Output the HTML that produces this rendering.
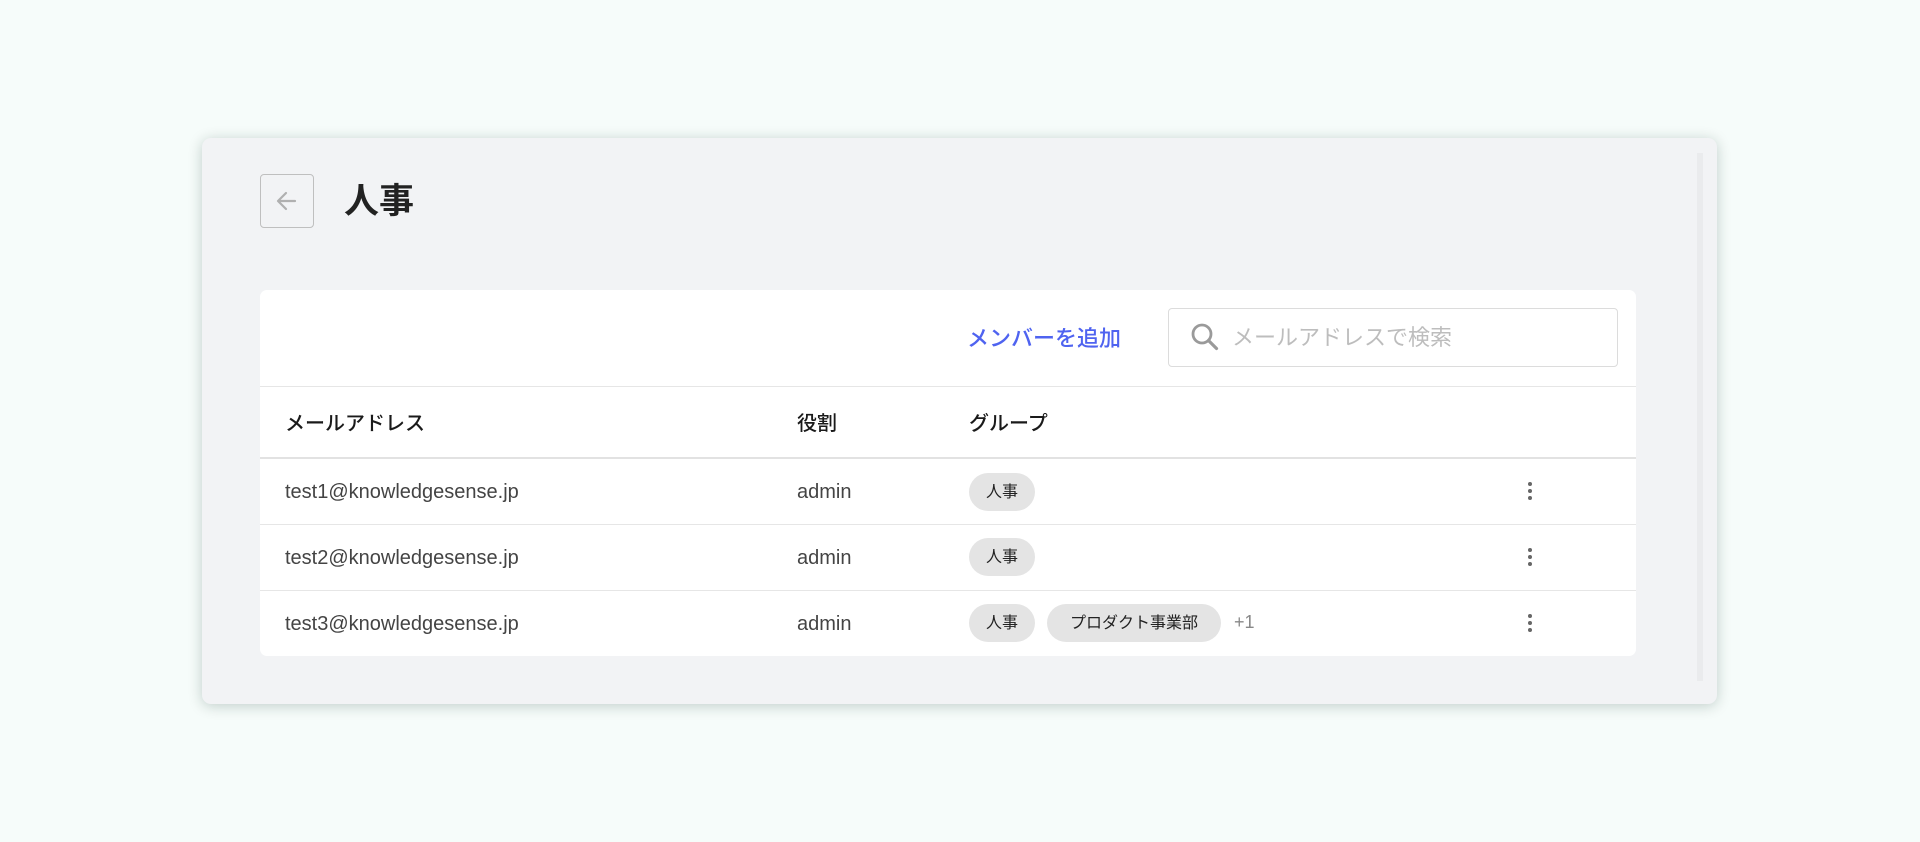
<!DOCTYPE html>
<html><head><meta charset="utf-8"><style>
*{box-sizing:border-box;margin:0;padding:0}
body{width:1920px;height:842px;background:#f6fcfa;font-family:"Liberation Sans","Noto Sans CJK JP",sans-serif;position:relative;overflow:hidden}
.card{position:absolute;left:202px;top:138px;width:1515px;height:566px;background:#f2f3f5;border-radius:9px;box-shadow:0 2px 14px rgba(0,40,30,0.22)}
.sb{position:absolute;left:1697px;top:153px;width:6px;height:528px;background:#eaebed}
.back{position:absolute;left:260px;top:174px;width:54px;height:54px;border:1px solid #bfbfbf;border-radius:4px;background:#f2f3f5}
.title{position:absolute;left:344px;top:180px;font-size:35px;font-weight:bold;color:#222;line-height:44px}
.panel{position:absolute;left:260px;top:290px;width:1376px;height:366px;background:#fff;border-radius:7px}
.add{position:absolute;left:967px;top:325px;font-size:22px;font-weight:500;color:#4f63f0;line-height:28px}
.search{position:absolute;left:1168px;top:308px;width:450px;height:59px;border:1px solid #dcdcdc;border-radius:4px;background:#fff}
.ph{position:absolute;left:63px;top:16px;font-size:22px;color:#bdbdbd;line-height:26px}
.hl{position:absolute;left:260px;width:1376px;height:1px;background:#e6e6e6}
.t{position:absolute;font-size:20px;line-height:24px}
.h{color:#1a1a1a;font-weight:500}
.c{color:#444}
.chip{position:absolute;height:38px;border-radius:19px;background:#e4e4e4;font-size:16px;color:#222;line-height:40px;text-align:center}
.more{position:absolute;font-size:18px;color:#888;line-height:24px}
.keb{position:absolute;width:4px}
.keb i{display:block;width:4px;height:4px;border-radius:2px;background:#666;margin-bottom:3px}
</style></head><body>
<div class="card"></div>
<div class="sb"></div>
<div class="back"><svg width="54" height="54" viewBox="0 0 54 54" style="position:absolute;left:-1px;top:-1px"><path d="M35 27H19M26 19l-8 8 8 8" stroke="#b0b0b0" stroke-width="2.2" fill="none" stroke-linecap="round" stroke-linejoin="round"/></svg></div>
<div class="title">人事</div>
<div class="panel"></div>
<div class="add">メンバーを追加</div>
<div class="search"><svg width="34" height="34" viewBox="0 0 34 34" style="position:absolute;left:20px;top:12px"><circle cx="13" cy="13" r="9" stroke="#9a9a9a" stroke-width="2.8" fill="none"/><path d="M19.5 19.5l8 8" stroke="#9a9a9a" stroke-width="3.2" stroke-linecap="round"/></svg><div class="ph">メールアドレスで検索</div></div>
<div class="hl" style="top:386px"></div>
<div class="t h" style="left:285px;top:412px">メールアドレス</div>
<div class="t h" style="left:797px;top:412px">役割</div>
<div class="t h" style="left:969px;top:412px">グループ</div>
<div class="hl" style="top:457px;height:2px;background:#e2e2e2"></div>

<div class="t c" style="left:285px;top:480px">test1@knowledgesense.jp</div>
<div class="t c" style="left:797px;top:480px">admin</div>
<div class="chip" style="left:969px;top:473px;width:66px">人事</div>
<div class="keb" style="left:1528px;top:482px"><i></i><i></i><i></i></div>
<div class="hl" style="top:524px"></div>

<div class="t c" style="left:285px;top:546px">test2@knowledgesense.jp</div>
<div class="t c" style="left:797px;top:546px">admin</div>
<div class="chip" style="left:969px;top:538px;width:66px">人事</div>
<div class="keb" style="left:1528px;top:548px"><i></i><i></i><i></i></div>
<div class="hl" style="top:590px"></div>

<div class="t c" style="left:285px;top:612px">test3@knowledgesense.jp</div>
<div class="t c" style="left:797px;top:612px">admin</div>
<div class="chip" style="left:969px;top:604px;width:66px">人事</div>
<div class="chip" style="left:1047px;top:604px;width:174px">プロダクト事業部</div>
<div class="more" style="left:1234px;top:610px">+1</div>
<div class="keb" style="left:1528px;top:614px"><i></i><i></i><i></i></div>
</body></html>
